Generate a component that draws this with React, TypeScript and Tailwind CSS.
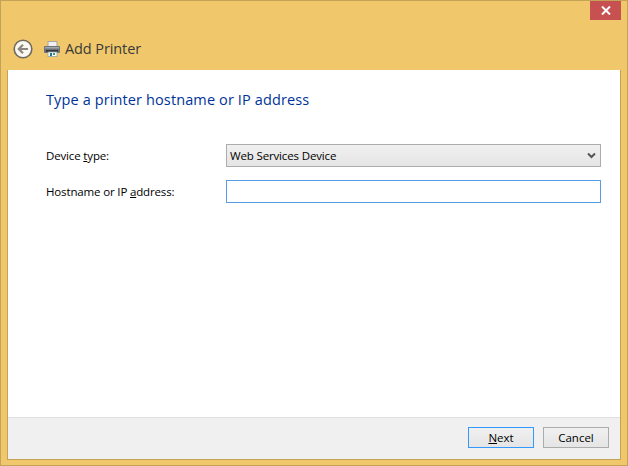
import React from 'react';

const BackIcon = () => (
  <svg width="20" height="20" viewBox="0 0 20 20">
    <circle cx="10" cy="10" r="8.8" fill="#fbf8f1" stroke="#6f6a60" strokeWidth="1.6" />
    <path d="M15 10H6.5M10 5.8 5.8 10l4.2 4.2" fill="none" stroke="#8a8680" strokeWidth="2.2" />
  </svg>
);

const PrinterIcon = () => (
  <svg width="16" height="16" viewBox="0 0 16 16">
    <rect x="4" y="0.500" width="9" height="5" fill="#f0f0f0" stroke="#a5a5a5" />
    <rect x="0" y="5" width="16" height="7" rx="1" fill="#6d7278" />
    <rect x="1" y="6" width="14" height="1.500" fill="#a3a8ad" />
    <rect x="2" y="9" width="12" height="2" fill="#33373b" />
    <rect x="4" y="11" width="9" height="4.500" fill="#fafafa" stroke="#8fa3ad" strokeWidth="0.800" />
    <rect x="6" y="12" width="2" height="3" fill="#1f7a7a" />
    <rect x="9" y="12" width="2" height="2" fill="#3a9a8a" />
  </svg>
);

export default function App() {
  return (
    <div className="w-[628px] h-[466px] flex flex-col bg-[#f0c86b] border border-[#c2a358] font-['Open_Sans',sans-serif] text-[#000] overflow-hidden">
      {/* Title bar */}
      <div className="h-[19px] flex justify-end pr-[6px] shrink-0">
        <button className="w-[31px] h-[19px] bg-[#c75050] flex items-center justify-center">
          <svg width="10" height="9" viewBox="0 0 10 9">
            <path d="M1 .5 9 8.500M9 .5 1 8.500" stroke="#fff" strokeWidth="2" />
          </svg>
        </button>
      </div>

      {/* Nav row */}
      <div className="h-[50px] flex items-center pl-[12px] pt-[8px] shrink-0">
        <BackIcon />
        <span className="ml-[11px] flex"><PrinterIcon /></span>
        <span className="ml-[5px] text-[14.5px] text-[#3a3a3a] tracking-[-0.1px]">Add Printer</span>
      </div>

      {/* Client area */}
      <div className="mx-[6px] flex-1 flex flex-col bg-white border border-[#c2a358] border-t-0 min-h-0">
        <div className="flex-1 pl-[38px] pr-[19px] pt-[20px] bg-white">
          <h1 className="text-[14.5px] leading-[20px] text-[#003399] tracking-[0.12px]">Type a printer hostname or IP address</h1>

          <div className="mt-[34px] flex items-center h-[23px]">
            <label className="w-[180px] shrink-0 text-[11.5px] tracking-[-0.15px]">
              Device <span className="underline">t</span>ype:
            </label>
            <div className="w-[375px] h-[23px] shrink-0 border border-[#acacac] bg-gradient-to-b from-[#f0f0f0] to-[#e5e5e5] flex items-center justify-between pl-[3px] pr-[4px] text-[11.5px] tracking-[-0.15px]">
              <span>Web Services Device</span>
              <svg width="9" height="7" viewBox="0 0 9 7">
                <path d="M1 1.500 4.500 5 8 1.500" fill="none" stroke="#555" strokeWidth="2" />
              </svg>
            </div>
          </div>

          <div className="mt-[13px] flex items-center h-[23px]">
            <label className="w-[180px] shrink-0 text-[11.5px] tracking-[-0.15px]">
              Hostname or IP <span className="underline">a</span>ddress:
            </label>
            <div className="w-[375px] h-[23px] shrink-0 border border-[#569de5] bg-white" />
          </div>
        </div>

        {/* Footer */}
        <div className="h-[42px] shrink-0 bg-[#f0f0f0] border-t border-[#dfdfdf] flex items-center justify-end pr-[11px] gap-[9px] pb-[2px]">
          <button className="w-[66px] h-[21px] border border-[#3399ff] bg-gradient-to-b from-[#f0f0f0] to-[#e5e5e5] text-[11.5px] leading-[18px]">
            <span className="underline">N</span>ext
          </button>
          <button className="w-[66px] h-[21px] border border-[#acacac] bg-gradient-to-b from-[#f0f0f0] to-[#e5e5e5] text-[11.5px] leading-[18px]">
            Cancel
          </button>
        </div>
      </div>
      <div className="h-[5px] shrink-0" />
    </div>
  );
}
